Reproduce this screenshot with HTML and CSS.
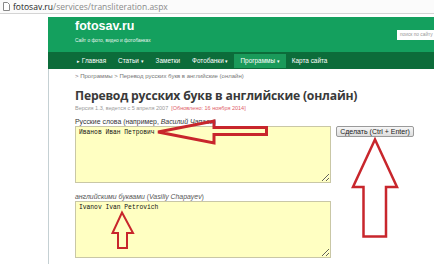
FILE: index.html
```html
<!DOCTYPE html>
<html>
<head>
    <title>Транслитерация</title>
    <link rel="stylesheet" href="styles.css">
</head>
<body>
    <div class="addr">
        <svg class="page-icon" width="7" height="9" viewBox="0 0 7 9">
            <path d="M0.5 0.5 H4.5 L6.5 2.5 V8.5 H0.5 Z" fill="#fff" stroke="#888" stroke-width="1"/>
        </svg>
        <span class="host">fotosav.ru</span><span class="path">/services/transliteration.aspx</span>
    </div>

    <div class="site">
        <div class="head">
            <div class="brand">
                <div class="logo">fotosav.ru</div>
                <div class="tag">Сайт о фото, видео и фотобанках</div>
            </div>
            <div class="search">поиск по сайту</div>
        </div>
        <div class="menu">
            <span class="item"><span class="bullet">▸</span> Главная</span>
            <span class="item">Статьи <span class="caret">▾</span></span>
            <span class="item">Заметки</span>
            <span class="item">Фотобанки <span class="caret">▾</span></span>
            <span class="item active">Программы <span class="caret">▾</span></span>
            <span class="item">Карта сайта</span>
        </div>
        <div class="content">
            <div class="crumbs">&gt; Программы &gt; Перевод русских букв в английские (онлайн)</div>
            <h1>Перевод русских букв в английские (онлайн)</h1>
            <div class="meta">Версия 1.3, ведется с 5 апреля 2007 &nbsp;<span class="upd">[Обновлено: 16 ноября 2014]</span></div>
            <div class="label">Русские слова (например, <i>Василий Чапаев</i>)</div>
            <div class="row">
                <textarea class="box">Иванов Иван Петрович</textarea>
                <button class="go">Сделать (Ctrl + Enter)</button>
            </div>
            <div class="label second"><i>английскими буквами</i> (<i>Vasiliy Chapayev</i>)</div>
            <textarea class="box">Ivanov Ivan Petrovich</textarea>
        </div>
    </div>

    <svg class="marks" width="434" height="264" viewBox="0 0 434 264">
        <path d="M158 132 L214 121 L214 127.5 L266.5 127.5 L266.5 134.5 L214 134.5 L214 143 Z" fill="none" stroke="#c8262c" stroke-width="3" stroke-linejoin="miter"/>
        <path d="M375 139.5 L397 187 L386 187 L386 236.5 L363.5 236.5 L363.5 187 L353 187 Z" fill="none" stroke="#c8262c" stroke-width="2.5"/>
        <path d="M122 212.5 L133 233 L127 233 L127 248 L118 248 L118 233 L112.5 233 Z" fill="none" stroke="#c8262c" stroke-width="2"/>
    </svg>
</body>
</html>
```

FILE: styles.css
```css
body {
    margin: 0;
    width: 434px;
    height: 264px;
    overflow: hidden;
    background: #fff;
    font-family: "Liberation Sans", Arial, sans-serif;
    position: relative;
}
.addr {
    height: 13px;
    border-bottom: 1px solid #d4d4d4;
    background: #fbfbfb;
    display: flex;
    align-items: center;
    padding-left: 3px;
    font-size: 8.5px;
    font-family: "Open Sans", "Liberation Sans", sans-serif;
}
.page-icon {
    margin-right: 3px;
}
.host {
    color: #222;
}
.path {
    color: #8a8a8a;
}
.site {
    margin-top: 3px;
    margin-left: 48px;
}
.head {
    height: 35px;
    background: #14a05e;
    display: flex;
    justify-content: space-between;
    padding-left: 27px;
}
.logo {
    color: #fff;
    font-weight: bold;
    font-size: 12.5px;
    line-height: 14px;
    margin-top: 2px;
}
.tag {
    color: #e8f5ee;
    font-size: 4.8px;
    margin-top: 5px;
}
.search {
    width: 34px;
    height: 10px;
    margin-top: 13px;
    background: #fff;
    color: #999;
    font-size: 4.8px;
    line-height: 10px;
    padding-left: 3px;
    white-space: nowrap;
    overflow: hidden;
}
.menu {
    height: 17px;
    background: #0c6c3a;
    display: flex;
    align-items: center;
    padding-left: 23px;
    font-size: 6.4px;
    color: #fff;
}
.item {
    padding: 0 6px;
    line-height: 13px;
    white-space: nowrap;
}
.item.active {
    background: #1a9a5a;
}
.bullet, .caret {
    font-size: 4.5px;
}
.content {
    border-left: 1px solid #c5d0d3;
    padding-left: 26px;
    padding-top: 3px;
    height: 200px;
}
.crumbs {
    font-size: 6px;
    line-height: 8px;
    color: #777;
}
h1 {
    margin: 8px 0 0;
    font-size: 12.2px;
    line-height: 16px;
    color: #3a3a3a;
    font-family: "Open Sans", "Liberation Sans", sans-serif;
    font-weight: bold;
    letter-spacing: -0.2px;
}
.meta {
    margin-top: 1px;
    font-size: 5.5px;
    line-height: 7px;
    color: #999;
}
.upd {
    color: #e0606a;
}
.label {
    margin-top: 5px;
    font-size: 6.9px;
    line-height: 9px;
    color: #333;
}
.label.second {
    margin-top: 10px;
    line-height: 8px;
    color: #555;
}
.row {
    display: flex;
    align-items: flex-start;
}
.box {
    display: block;
    box-sizing: border-box;
    width: 256px;
    height: 57px;
    margin: 0;
    padding: 2px 3px;
    background: #ffffc2;
    border: 1px solid #c9c7a6;
    font-family: "Liberation Mono", "Courier New", monospace;
    font-size: 6.3px;
    line-height: 8px;
    color: #111;
    resize: both;
}
.go {
    margin-left: 5px;
    width: 78px;
    height: 11px;
    padding: 0;
    font-family: "Liberation Sans", Arial, sans-serif;
    font-size: 7px;
    color: #222;
    background: linear-gradient(#f6f6f6, #dedede);
    border: 1px solid #9a9a9a;
    border-radius: 2px;
}
.marks {
    position: absolute;
    left: 0;
    top: 0;
    pointer-events: none;
}
```
